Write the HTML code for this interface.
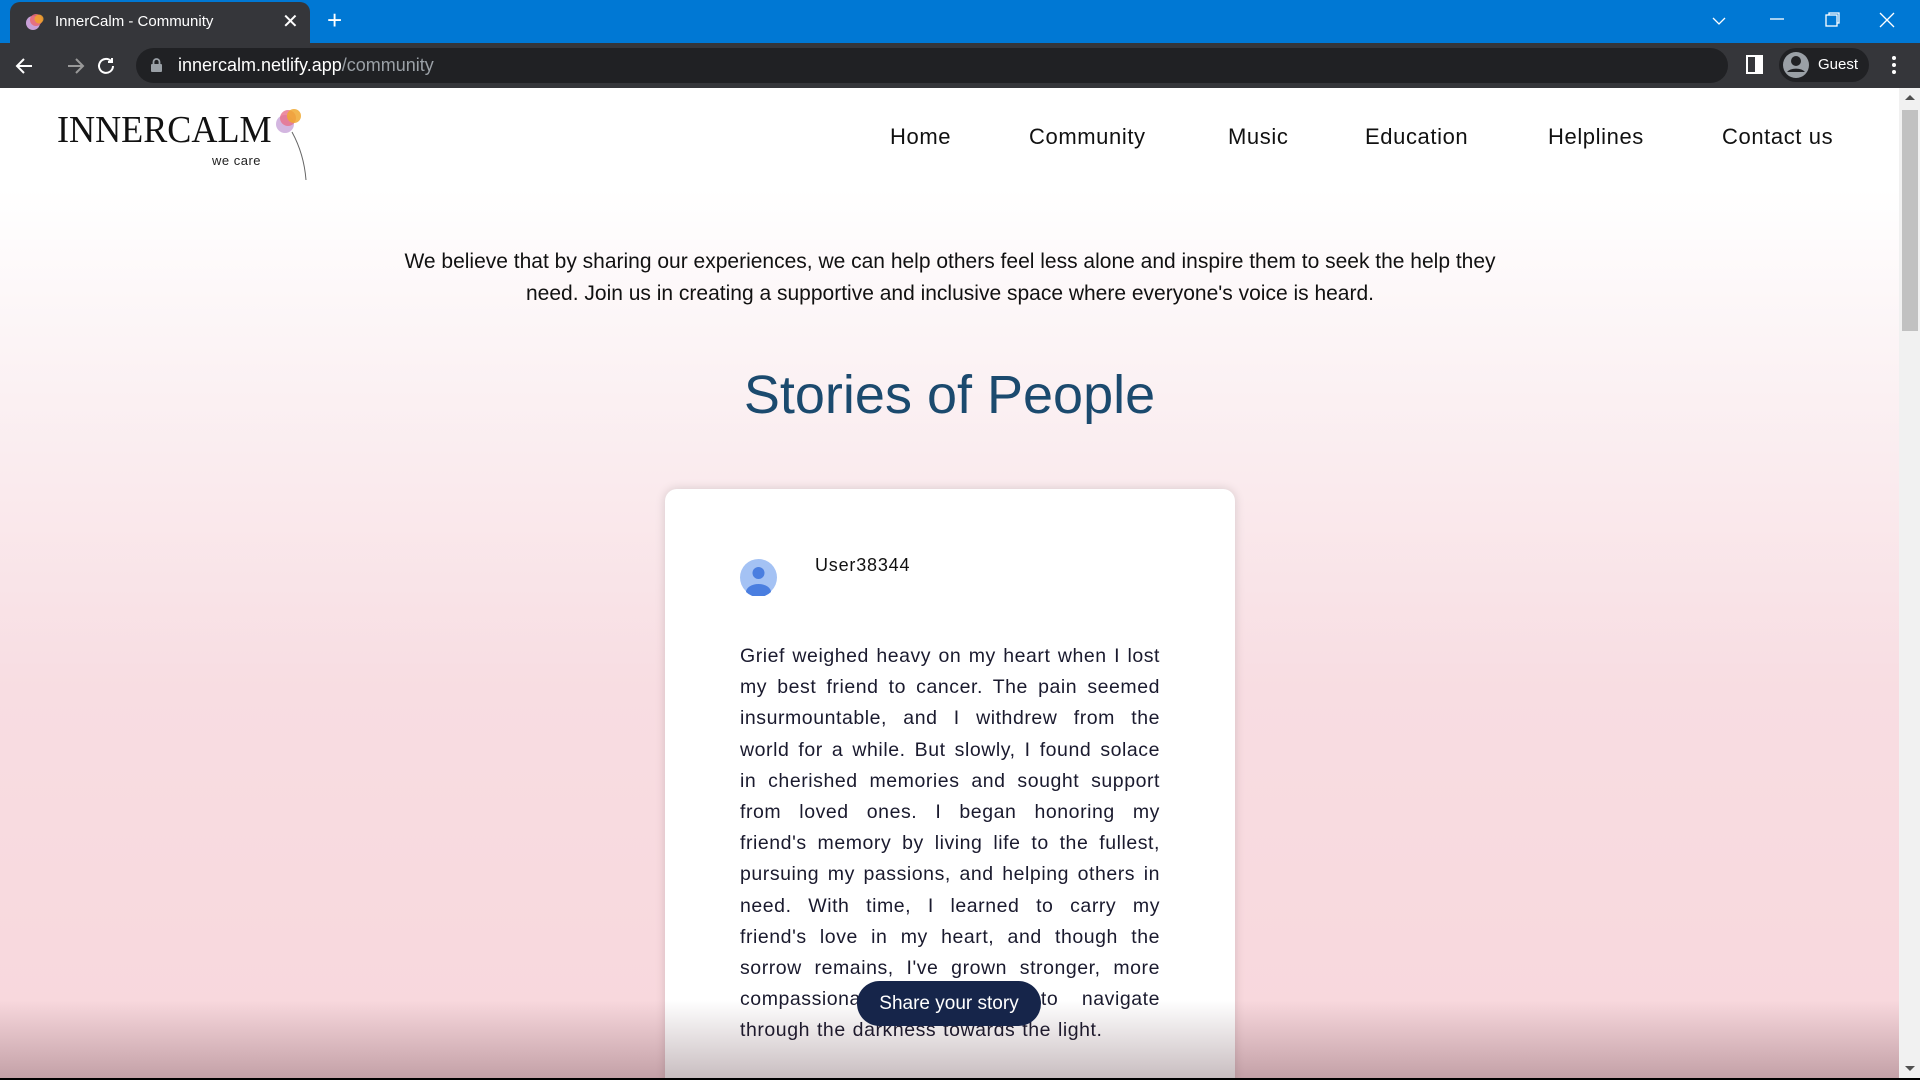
<!DOCTYPE html>
<html><head><meta charset="utf-8"><style>
*{margin:0;padding:0;box-sizing:border-box}
html,body{width:1920px;height:1080px;overflow:hidden}
body{font-family:"Liberation Sans",sans-serif;background:#000;position:relative}
.tabbar{position:absolute;left:0;top:0;width:1920px;height:43px;background:#0078d4}
.tab{position:absolute;left:10px;top:2px;width:300px;height:41px;background:#35363a;border-radius:10px 10px 0 0;color:#fff;font-size:15px}
.toolbar{position:absolute;left:0;top:43px;width:1920px;height:45px;background:#35363a}
.omni{position:absolute;left:136px;top:5px;width:1592px;height:35px;background:#202124;border-radius:18px;color:#fff;font-size:18px}
.page{position:absolute;left:0;top:88px;width:1899px;height:990px;background:linear-gradient(#fff 0px,#fff 100px,#fbf1f3 300px,#f8dde2 600px,#f8d7dc 990px);overflow:hidden}
.scroll{position:absolute;left:1899px;top:88px;width:21px;height:990px;background:#f1f1f1}
.nav a{position:absolute;top:36px;font-size:22px;color:#111;letter-spacing:.6px}
.intro{position:absolute;left:380px;width:1140px;top:158px;text-align:center;font-size:21px;line-height:32px;color:#111}
h1{position:absolute;left:0;width:1899px;top:276px;text-align:center;font-weight:normal;font-size:54px;color:#1b4a6e}
.card{position:absolute;left:665px;top:401px;width:570px;height:600px;background:#fff;border-radius:12px;box-shadow:0 0 10px rgba(0,0,0,.15)}
.txt{position:absolute;left:75px;top:152px;width:420px;font-size:19.5px;line-height:31.2px;text-align:justify;color:#1a1a2e;letter-spacing:.55px;word-spacing:1px}
.fade{position:absolute;left:0;top:912px;width:1899px;height:78px;background:linear-gradient(rgba(0,0,0,0),rgba(60,20,30,.28))}
.btn{position:absolute;left:857px;top:893px;width:184px;height:45px;background:#16254a;color:#fff;border-radius:23px;font-size:19px;text-align:center;line-height:45px}
</style></head><body>
<div class="tabbar">
 <div class="tab">
  <svg style="position:absolute;left:15px;top:10px" width="20" height="20" viewBox="0 0 20 20"><circle cx="8" cy="11" r="7" fill="#c9a0d8"/><circle cx="11" cy="8" r="6" fill="#e86a7a" opacity=".9"/><circle cx="14" cy="7" r="4.5" fill="#f0a030" opacity=".9"/></svg>
  <span style="position:absolute;left:45px;top:11px">InnerCalm - Community</span>
  <span style="position:absolute;left:272px;top:7px;font-size:20px">✕</span>
 </div>
 <span style="position:absolute;left:327px;top:5px;color:#fff;font-size:26px">+</span>
 <svg style="position:absolute;left:1710px;top:12px" width="200" height="20" viewBox="0 0 200 20" stroke="#fff" fill="none" stroke-width="1.3"><path d="M3 6l6 6 6-6"/><path d="M60 7h14"/><rect x="116" y="3" width="11" height="11"/><path d="M119 3v-2h10v10h-2"/><path d="M170 1l14 14M184 1l-14 14"/></svg>
</div>
<div class="toolbar">
 <svg style="position:absolute;left:14px;top:12px" width="100" height="22" viewBox="0 0 100 22" fill="none" stroke-width="2"><path d="M18 11H4M10 4l-7 7 7 7" stroke="#fff"/><path d="M54 11h14M62 4l7 7-7 7" stroke="#999"/><path d="M99 11a7 7 0 1 1-2-5" stroke="#fff"/><path d="M98 3v4h-4" stroke="#fff"/></svg>
 <div class="omni">
  <svg style="position:absolute;left:15px;top:10px" width="11" height="14" viewBox="0 0 11 14"><rect x="0" y="6" width="11" height="8" rx="1" fill="#9aa0a6"/><path d="M2.5 6V4a3 3 0 0 1 6 0v2" stroke="#9aa0a6" stroke-width="1.8" fill="none"/></svg>
  <span style="position:absolute;left:42px;top:7px">innercalm.netlify.app<span style="color:#9aa0a6">/community</span></span>
 </div>
 <svg style="position:absolute;left:1746px;top:12px" width="18" height="20"><rect x="1" y="1" width="15" height="17" fill="none" stroke="#fff" stroke-width="2"/><rect x="9" y="1" width="7" height="17" fill="#fff"/></svg>
 <div style="position:absolute;left:1779px;top:5px;width:90px;height:34px;background:#202124;border-radius:17px">
  <svg style="position:absolute;left:3px;top:3px" width="28" height="28" viewBox="0 0 28 28"><circle cx="14" cy="14" r="13" fill="#9aa0a6"/><circle cx="14" cy="10" r="5" fill="#202124"/><path d="M5 21a10 6 0 0 1 18 0" fill="#202124"/></svg>
  <span style="position:absolute;left:39px;top:8px;color:#fff;font-size:15px">Guest</span>
 </div>
 <svg style="position:absolute;left:1891px;top:12px" width="6" height="20"><circle cx="3" cy="3" r="2" fill="#fff"/><circle cx="3" cy="10" r="2" fill="#fff"/><circle cx="3" cy="17" r="2" fill="#fff"/></svg>
</div>
<div class="page">
 <div style="position:absolute;left:57px;top:20px;font-family:'Liberation Serif',serif;font-size:38px;transform:scaleX(.95);transform-origin:left;color:#111">INNERCALM</div>
 <div style="position:absolute;left:212px;top:65px;font-size:13px;color:#222;letter-spacing:.5px">we care</div>
 <svg style="position:absolute;left:272px;top:18px" width="50" height="75" viewBox="0 0 50 75"><circle cx="13" cy="18" r="9" fill="#c8a4d8" opacity=".8"/><circle cx="16" cy="12" r="8" fill="#e8708a" opacity=".8"/><circle cx="22" cy="10" r="7" fill="#f0a830" opacity=".85"/><path d="M20 26q12 22 14 48" stroke="#666" fill="none" stroke-width="1"/></svg>
 <div class="nav"><a style="left:890px">Home</a><a style="left:1029px">Community</a><a style="left:1228px">Music</a><a style="left:1365px">Education</a><a style="left:1548px">Helplines</a><a style="left:1722px">Contact us</a></div>
 <div class="intro">We believe that by sharing our experiences, we can help others feel less alone and inspire them to seek the help they need. Join us in creating a supportive and inclusive space where everyone's voice is heard.</div>
 <h1>Stories of People</h1>
 <div class="card">
  <svg style="position:absolute;left:75px;top:70px" width="37" height="37" viewBox="0 0 37 37"><circle cx="18.5" cy="18.5" r="18.5" fill="#a4c2f4"/><circle cx="18.5" cy="14" r="6" fill="#4a7ee0"/><path d="M6 33a12.5 8 0 0 1 25 0a18 18 0 0 1-25 0z" fill="#4a7ee0"/></svg>
  <div style="position:absolute;left:150px;top:66px;font-size:18px;color:#111;letter-spacing:.8px">User38344</div>
  <div class="txt">Grief weighed heavy on my heart when I lost my best friend to cancer. The pain seemed insurmountable, and I withdrew from the world for a while. But slowly, I found solace in cherished memories and sought support from loved ones. I began honoring my friend's memory by living life to the fullest, pursuing my passions, and helping others in need. With time, I learned to carry my friend's love in my heart, and though the sorrow remains, I've grown stronger, more compassionate, and ready to navigate through the darkness towards the light.</div>
 </div>
 <div class="fade"></div>
 <div class="btn">Share your story</div>
</div>
<div class="scroll">
 <div style="position:absolute;left:3px;top:22px;width:16px;height:221px;background:#c1c1c1"></div>
 <div style="position:absolute;left:6px;top:7px;border:5px solid transparent;border-bottom:5px solid #505050;border-top:0"></div>
 <div style="position:absolute;left:6px;top:978px;border:5px solid transparent;border-top:5px solid #505050;border-bottom:0"></div>
</div>
</body></html>
